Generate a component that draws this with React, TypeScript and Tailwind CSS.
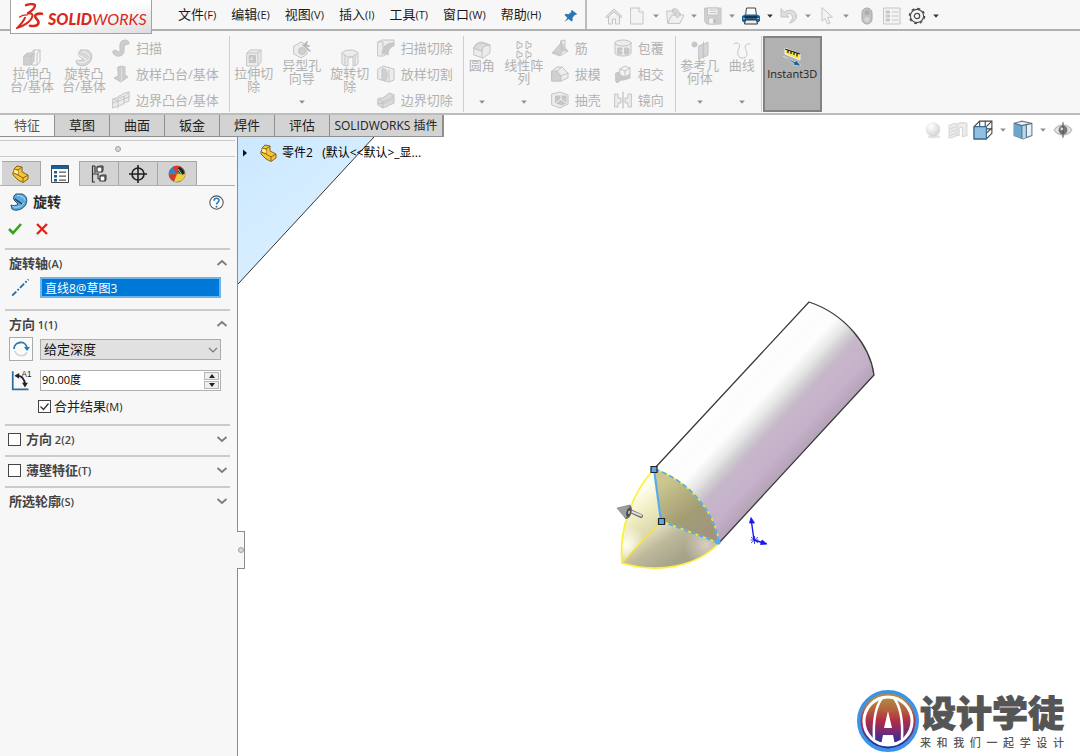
import React from "react";

type Kids = { children: React.ReactNode };

/* ---------- shared pieces ---------- */

function Ico({ children, size = 18 }: Kids & { size?: number }) {
  return (
    <svg viewBox="0 0 18 18" width={size} height={size} className="block shrink-0" fill="none" aria-hidden="true">
      {children}
    </svg>
  );
}

function Pale({ children }: Kids) {
  return (
    <Ico>
      <g fill="#ececec" stroke="#c4c4c4" strokeWidth="1" strokeLinejoin="round" strokeLinecap="round">
        {children}
      </g>
    </Ico>
  );
}

function Caret({ dark = false }: { dark?: boolean }) {
  return (
    <svg viewBox="0 0 10 10" width="10" height="10" className="block shrink-0" aria-hidden="true">
      <path d="M2.2 3.5h5.6L5 6.8z" fill={dark ? "#333" : "#8f8f8f"} />
    </svg>
  );
}

function Chevron({ up = false }: { up?: boolean }) {
  return (
    <svg viewBox="0 0 12 12" width="12" height="12" className="block shrink-0" fill="none" aria-hidden="true">
      <path d={up ? "M1.5 8 6 4l4.500 4" : "M1.500 4 6 8l4.500-4"} stroke="#7d7d7d" strokeWidth="1.8" />
    </svg>
  );
}

function Key({ children }: Kids) {
  return <span className="text-[11px]">{children}</span>;
}

/* ---------- ribbon icons ---------- */

const pale = {
  extrude: (
    <Pale>
      <path d="M8 4l3-3h6v12l-3 3H9z" fill="#f6f6f6" />
      <path d="M11 1v6M14 16V5l3-4" fill="none" />
      <path d="M1 7l3-3h7v8l-3 4H1z" fill="#cfcfcf" />
      <path d="M1 7h7v8M8 7l3-3" fill="none" />
    </Pale>
  ),
  revolve: (
    <Pale>
      <path d="M6 1h6c4 1 6 5 4 10-2 5-9 8-14 4l-1-4c2 1 5 1 7-1L4 7C3 4 4 2 6 1z" fill="#d6d6d6" />
      <path d="M7 3c3-1 6 1 7 4M4 6l8 5M2 12c3 3 9 2 12-2" fill="none" stroke="#f7f7f7" />
    </Pale>
  ),
  sweep: (
    <Pale>
      <path d="M10 2c3-2 7-1 7 2 0 2-3 1-4 2-2 2 1 10-5 11-5 1-8-3-7-5 1-1 3-1 4 0 1 1 3 2 3-1 0-4-1-7 2-9z" fill="#cdcdcd" />
    </Pale>
  ),
  loft: (
    <Pale>
      <path d="M6 2l4-1 3 1v8l3 2-7 5-7-4 4-2z" fill="#cdcdcd" />
      <path d="M9.500 3v13" fill="none" stroke="#dedede" />
    </Pale>
  ),
  boundary: (
    <Pale>
      <path d="M1 8c2-2 4 0 5-2s3-1 5-3 4-1 6-2v9c-3 2-4 0-6 3-2 2-4 1-10 4z" />
      <path d="M1 8c3 2 4 1 6-1s5 1 10-6M6 17V9M12 13V6M1 12l16-6" fill="none" />
    </Pale>
  ),
  cut: (
    <Pale>
      <path d="M2 4l3-3h11v12l-3 4H2zM2 4h11v12M13 4l3-3" />
      <rect x="4.500" y="6.500" width="6" height="7" fill="#c6c6c6" />
      <path d="M8 6.500v5H5" fill="#f1f1f1" />
    </Pale>
  ),
  hole: (
    <Pale>
      <path d="M1 5l7-4 6 3v9l-6 4-7-4z" />
      <circle cx="9" cy="10" r="3.500" fill="#cfcfcf" />
      <path d="M10 4l7 6M14 1l-2 3 4 1" stroke="#b3b3b3" strokeWidth="1.600" fill="none" />
    </Pale>
  ),
  revCut: (
    <Pale>
      <path d="M1 4c2-4 14-4 16 0v10c0 2-4 3-5 3V9c-1-2-4-2-5 0v8c-3 0-6-1-6-3z" />
      <path d="M1 4c2 3 5 3 8 5 2-2 6-2 8-5M4 6v10M14 6v10" fill="none" />
    </Pale>
  ),
  sweepCut: (
    <Pale>
      <path d="M1 3l4-2h12v3c-5 1-7 5-7 10l-3 3H1z" />
      <path d="M5 15C5 8 9 4 17 4v3c-4 1-6 4-6 9" fill="#c9c9c9" />
      <path d="M1 3h5v5" fill="none" />
    </Pale>
  ),
  loftCut: (
    <Pale>
      <path d="M1 4l5-3 11 3v11l-5 2-11-3z" />
      <path d="M8 4c3 2 3 9 0 12l-3-1V4z" fill="#d0d0d0" />
      <path d="M12 5v11" />
    </Pale>
  ),
  boundaryCut: (
    <Pale>
      <path d="M1 8c2-2 4 0 6-2s3-2 5-4l5 2v8c-3 2-4 1-6 3s-4 0-5 2l-5-3z" fill="#dadada" />
      <path d="M1 8l5 3c3-3 5 0 11-7M6 17v-6M1 12c4 2 9 0 16-5" fill="none" />
    </Pale>
  ),
  fillet: (
    <Pale>
      <path d="M1 6c1-3 4-5 8-5l8 3v8l-7 5-9-3z" />
      <path d="M1 7l8 3c0-4 3-6 8-6M9 10v7" fill="none" />
      <path d="M9 10c0-4 3-6 8-6l-7-2C5 2 2 4 1 7z" fill="#dcdcdc" />
    </Pale>
  ),
  pattern: (
    <Pale>
      <path
        d="M2 1v6.500h2V6h3V2.500H4V1zM11 1v6.500h2V6h3V2.500h-3V1zM2 10.500V17h2v-1.500h3V12H4v-1.500zM11 10.500V17h2v-1.500h3V12h-3v-1.500z"
        fill="#f4f4f4"
        stroke="#b8b8b8"
      />
    </Pale>
  ),
  rib: (
    <Pale>
      <path d="M10 2l4-1v9l3 2-8 5-8-3 9-3z" />
      <path d="M10 2v9l7 1M10 4L2 13l7 3 3-5z" fill="#cfcfcf" />
    </Pale>
  ),
  draft: (
    <Pale>
      <path d="M1 6l5-4h5l6 6v5l-7 3H1z" />
      <path d="M1 6h5l4 5v5H1z" fill="#d0d0d0" />
      <path d="M6 6l5-4M10 11l7-3" />
    </Pale>
  ),
  shell: (
    <Pale>
      <path d="M1 3l8-2 8 3v9l-8 4-8-3z" />
      <path d="M5 5h10v7l-4 2-6-2z" fill="#c6c6c6" />
      <path d="M5 12l5-4 5 4M10 8V5" fill="none" stroke="#f3f3f3" />
    </Pale>
  ),
  wrap: (
    <Pale>
      <path d="M1 4v10c0 4 16 4 16 0V4" />
      <ellipse cx="9" cy="4" rx="8" ry="3" />
      <path d="M4 9h4v2H6v2h2v2H4zM11 9h3l1 1v4l-1 1h-3z" fill="#c8c8c8" />
    </Pale>
  ),
  intersect: (
    <Pale>
      <path d="M2 8l4-1v3l5 2v-2l5-1v4l-6 2H7l-4 3-1-1z" fill="#c9c9c9" />
      <path d="M6 4l5-3 5 2v6l-5 3-5-2z" fill="#f2f2f2" />
      <path d="M6 4l5 2 5-3M11 6v6" fill="none" />
    </Pale>
  ),
  mirror: (
    <Pale>
      <path d="M1 3h3v4h3v5H4v4H1zM17 3h-3v4h-3v5h3v4h3z" />
      <path d="M9 1v16" stroke="#b3b3b3" />
    </Pale>
  ),
  refGeo: (
    <Pale>
      <circle cx="3.500" cy="3.500" r="2.500" fill="#c8c8c8" />
      <path d="M8 5l4-2v13l-4 2zM13 3l4-2v13l-4 2z" fill="#d6d6d6" />
      <path d="M12.500 1v16" strokeDasharray="2 1" />
    </Pale>
  ),
  curve: (
    <Pale>
      <path d="M1 3c3-3 7 0 5 4s-2 10 3 10 6-4 4-8 0-7 4-6" fill="none" />
    </Pale>
  ),
};

/* ---------- menu bar ---------- */

function Brand() {
  return (
    <a
      href="#home"
      aria-label="SOLIDWORKS"
      className="relative z-10 flex h-[34px] w-[142px] shrink-0 items-center border border-t-0 border-[#a3a3a3] bg-linear-to-br from-white via-white to-[#dcdcdc] pl-[5px] text-[#d9281e]"
    >
      <svg viewBox="0 0 28 28" width="28" height="28" className="block shrink-0" fill="none" stroke="currentColor" strokeLinecap="round">
        <path d="M10 2.200c4-1.400 9-1.500 9 .5 0 2.500-4 5.500-7 7.500" strokeWidth="2.400" />
        <path d="M12 10.200c4-.3 5.500 1.300 3.800 4.600-1.800 4-8 8.300-14.300 9.900 3-3 6-6 7.500-10" strokeWidth="2" />
        <path d="M3.500 14c2-1.500 5-2.300 8-2.200" strokeWidth="1.300" />
        <path d="M26 10.800c-5-.6-8 1-6.500 3.600 1 1.900 3.500 3 3 5.600-.5 2.800-5 3.500-8.500 2.700" strokeWidth="2.600" />
      </svg>
      <span className="mt-[4px] ml-[4px] font-['Lato'] text-[16px] leading-[20px] italic">
        <span className="font-black">SOLID</span>
        <span className="font-normal">WORKS</span>
      </span>
    </a>
  );
}

const menus: [string, string][] = [
  ["文件", "(F)"],
  ["编辑", "(E)"],
  ["视图", "(V)"],
  ["插入", "(I)"],
  ["工具", "(T)"],
  ["窗口", "(W)"],
  ["帮助", "(H)"],
];

function Tool({ label, caret, children }: Kids & { label: string; caret?: "pale" | "dark" }) {
  return (
    <button type="button" aria-label={label} className="flex shrink-0 items-center gap-[5px]">
      {children}
      {caret && <Caret dark={caret === "dark"} />}
    </button>
  );
}

function MenuBar() {
  return (
    <header className="flex h-[31px] items-start border-b-2 border-[#b0b0b0] bg-[#f7f7f7] pl-[10px]">
      <Brand />
      <nav className="ml-[26px] flex h-[30px] items-center gap-[15px] text-[13px] whitespace-nowrap text-[#1a1a1a]">
        {menus.map(([name, key]) => (
          <button type="button" key={name}>
            {name}
            <Key>{key}</Key>
          </button>
        ))}
      </nav>
      <button type="button" aria-label="固定" className="ml-[21px] flex h-[31px] items-center">
        <Ico>
          <path d="M10 3l5 4-1 1-1-.3-2.500 3 .3 2.600-1.300 1.200-3-2.600L2.500 15l2.800-4.300L2.500 8l1.300-1.200 2.700.4L9.300 5 9 4z" fill="#2b78b5" />
        </Ico>
      </button>
      <div className="ml-[5px] h-[29px] w-[2px] shrink-0 bg-[#bdbdbd]" />
      <div className="ml-[18px] flex h-[31px] items-center gap-[5px]">
        <Tool label="主页">
          <Pale>
            <path d="M3.500 9v8h4v-5h3v5h4V9" fill="#f1f1f1" />
            <path d="M1 9.500 9 2l8 7.500-1.500 1L9 5l-6.500 5.500z" fill="#e2e2e2" />
          </Pale>
        </Tool>
        <Tool label="新建" caret="pale">
          <Pale>
            <path d="M3 1h8l4 4v12H3z" fill="#f4f4f4" />
            <path d="M11 1v4h4" fill="#fff" />
          </Pale>
        </Tool>
        <Tool label="打开" caret="pale">
          <Pale>
            <path d="M1 4h5l1 2h7v10H2z" />
            <path d="M2 16l4-8h12l-4 8z" fill="#f1f1f1" />
            <path d="M7 2c4-1 6 1 6 5h2l-3.500 4L8 7h2c0-2-1-3-3-3z" fill="#dadada" />
          </Pale>
        </Tool>
        <Tool label="保存" caret="pale">
          <Pale>
            <path d="M1 1h16v16H3l-2-2z" fill="#cfcfcf" />
            <path d="M4 1h10v7H4zM5 11h8v6H5z" fill="#f1f1f1" />
            <path d="M6 3h6M6 5.500h6" />
            <path d="M10 12h2v4h-2z" fill="#bbb" />
          </Pale>
        </Tool>
        <Tool label="打印" caret="dark">
          <Ico>
            <path d="M4.500 1h9l1 8h-11z" fill="#fbfbfb" stroke="#444" />
            <path d="M0 9l3-1.500h12L18 9v5l-2 1.500H2L0 14z" fill="#1c659c" />
            <path d="M3 9h12l1 2H2z" fill="#16354d" />
            <path d="M3.500 13h11l1 4h-13z" fill="#eee" stroke="#333" />
            <path d="M1 11.500h2M15 11.500h2" stroke="#8cc2e8" />
          </Ico>
        </Tool>
        <Tool label="撤消" caret="pale">
          <Pale>
            <path d="M1 2v8h8L6.500 7.500c3-2 6 0 6 3 0 2-1 3-3 5.500 5-1 7-4 7-7 0-5-7-8-12-4z" fill="#dedede" />
          </Pale>
        </Tool>
        <Tool label="选择" caret="pale">
          <Pale>
            <path d="M4 1v13l3-2.500L9.500 17l2.500-1-2.500-5.500L14 10z" fill="#f3f3f3" />
          </Pale>
        </Tool>
        <div className="ml-[2px] flex items-center gap-[7px]">
          <Tool label="重建模型">
            <Ico>
              <rect x="4" y="1" width="10" height="16" rx="5" fill="#c2c2c2" stroke="#a9a9a9" />
              <circle cx="9" cy="5.500" r="2.500" fill="#adadad" />
              <circle cx="9" cy="12.500" r="2.500" fill="#d6d6d6" />
            </Ico>
          </Tool>
          <Tool label="文件属性">
            <Pale>
              <path d="M1 1h16v16H1z" fill="#f4f4f4" />
              <path d="M3.500 4h3v2h-3zM3.500 8h3v2h-3zM3.500 12h3v2h-3zM9 5h6M9 9h6M9 13h6" fill="#ccc" />
            </Pale>
          </Tool>
          <Tool label="选项" caret="dark">
            <Ico>
              <circle cx="9" cy="9" r="6.600" stroke="#4a4a4a" strokeWidth="1.100" fill="#f7f7f7" />
              <circle cx="9" cy="9" r="7.600" stroke="#4a4a4a" strokeWidth="1.300" strokeDasharray="3.020 2.949" />
              <circle cx="9" cy="9" r="2.700" stroke="#4a4a4a" strokeWidth="1.200" />
            </Ico>
          </Tool>
        </div>
      </div>
    </header>
  );
}

/* ---------- ribbon ---------- */

function Big({
  icon,
  text,
  narrow = false,
  menu = false,
}: {
  icon: React.ReactNode;
  text: string;
  narrow?: boolean;
  menu?: boolean;
}) {
  return (
    <button
      type="button"
      className={`flex shrink-0 flex-col items-center ${narrow ? "w-9" : "w-12"} ${menu ? "pt-[5px]" : "pt-[13px]"}`}
    >
      {icon}
      <span className="block w-full text-center leading-[13px] break-all whitespace-normal">{text}</span>
      {menu && (
        <span className="mt-auto mb-[5px]">
          <Caret />
        </span>
      )}
    </button>
  );
}

function Stack({ items }: { items: [React.ReactNode, string][] }) {
  return (
    <div className="flex shrink-0 flex-col gap-[8px] pt-[3px]">
      {items.map(([icon, text]) => (
        <button type="button" key={text} className="flex h-[18px] items-center gap-[6px] leading-[18px]">
          {icon}
          <span>{text}</span>
        </button>
      ))}
    </div>
  );
}

function Group({ children, className }: Kids & { className: string }) {
  return <div className={`flex shrink-0 border-r border-[#cfcfcf] ${className}`}>{children}</div>;
}

function Ribbon() {
  return (
    <section className="flex h-[84px] border-b-2 border-[#bcbcbc] bg-[#f7f7f7] pt-[5px] pb-[1px] text-[13px] whitespace-nowrap text-[#b2b2b2]">
      <Group className="gap-[4px] pr-[10px] pl-[8px]">
        <Big icon={pale.extrude} text="拉伸凸台/基体" />
        <Big icon={pale.revolve} text="旋转凸台/基体" />
        <Stack
          items={[
            [pale.sweep, "扫描"],
            [pale.loft, "放样凸台/基体"],
            [pale.boundary, "边界凸台/基体"],
          ]}
        />
      </Group>
      <Group className="pr-[10px]">
        <Big icon={pale.cut} text="拉伸切除" />
        <Big icon={pale.hole} text="异型孔向导" menu />
        <Big icon={pale.revCut} text="旋转切除" />
        <span className="w-[3px]" />
        <Stack
          items={[
            [pale.sweepCut, "扫描切除"],
            [pale.loftCut, "放样切割"],
            [pale.boundaryCut, "边界切除"],
          ]}
        />
      </Group>
      <Group className="pr-[11px]">
        <Big icon={pale.fillet} text="圆角" narrow menu />
        <Big icon={pale.pattern} text="线性阵列" menu />
        <div className="ml-[3px] flex gap-[13px]">
          <Stack
            items={[
              [pale.rib, "筋"],
              [pale.draft, "拔模"],
              [pale.shell, "抽壳"],
            ]}
          />
          <Stack
            items={[
              [pale.wrap, "包覆"],
              [pale.intersect, "相交"],
              [pale.mirror, "镜向"],
            ]}
          />
        </div>
      </Group>
      <Group className="pr-[1px]">
        <Big icon={pale.refGeo} text="参考几何体" menu />
        <Big icon={pale.curve} text="曲线" narrow menu />
      </Group>
      <button
        type="button"
        aria-pressed="true"
        className="ml-px flex w-[59px] shrink-0 flex-col items-center border-2 border-[#828282] bg-[#b1b1b1] pt-[10px] text-[#222]"
      >
        <Ico>
          <path d="M2 0l15 6v6L2 6z" fill="#ffe14a" stroke="#f4f4f4" />
          <path d="M2 1l15 5M5 2v3M8 3v3M11 4v3M14 5.500v3" stroke="#222" strokeWidth="1.300" />
          <path d="M0 8l12 6 1-2 5 6-8-1 1-1.500z" fill="#1d5f94" stroke="#e8eef3" strokeWidth=".6" />
        </Ico>
        <span className="font-['Open_Sans'] text-[11px] leading-[16px]">Instant3D</span>
      </button>
    </section>
  );
}

/* ---------- command tabs and view toolbar ---------- */

const tabs = ["特征", "草图", "曲面", "钣金", "焊件", "评估", "SOLIDWORKS 插件"];

function TabRow() {
  return (
    <div className="relative z-10 flex h-[22px] justify-between">
      <div role="tablist" className="flex text-[13px] leading-[19px] whitespace-nowrap text-[#222]">
        {tabs.map((tab, i) => (
          <button
            type="button"
            role="tab"
            key={tab}
            aria-selected={i === 0}
            className={
              i === 0
                ? "w-[54px] shrink-0 border-b border-[#8f8f8f] bg-[#f7f7f7] text-[#555]"
                : i === tabs.length - 1
                  ? "w-[115px] shrink-0 border-r-2 border-b border-l border-[#8f8f8f] bg-[#d3d3d3] text-[12px]"
                  : "w-[55px] shrink-0 border-b border-l border-[#8f8f8f] bg-[#d3d3d3]"
            }
          >
            {tab}
          </button>
        ))}
      </div>
      <div className="-mr-2 flex shrink-0 items-start gap-[5px] pt-[5px]">
        <Tool label="编辑外观">
          <Ico size={20}>
            <defs>
              <radialGradient id="ball" cx=".35" cy=".3" r=".75">
                <stop offset="0" stopColor="#fff" />
                <stop offset="1" stopColor="#d2d2d2" />
              </radialGradient>
            </defs>
            <ellipse cx="10" cy="15" rx="6" ry="1.500" fill="#e3e3e3" />
            <circle cx="9" cy="8.500" r="6.500" fill="url(#ball)" />
          </Ico>
        </Tool>
        <Tool label="应用布景">
          <Ico size={20}>
            <path d="M1 5l5-2 2 1v10l-5 2H1zM8 4c2-2 5-2 9-1v11l-4 1V7c-2-1-3 0-3 1v6H8z" fill="#ececec" stroke="#d6d6d6" />
            <path d="M2 8l5-2M2 11l5-2M2 14l5-2" stroke="#d6d6d6" />
          </Ico>
        </Tool>
        <Tool label="视图定向" caret="pale">
          <Ico size={20}>
            <path d="M1 6l5-5h11v11l-5 5H1z" fill="#fff" stroke="#444" />
            <path d="M6 1v5M11 1v5M12 8h5M12 12l5-5M12 17V6l5-5" stroke="#444" />
            <path d="M1 6h11v11H1z" fill="#8fc0e2" stroke="#3a6b90" />
          </Ico>
        </Tool>
        <Tool label="显示样式" caret="pale">
          <Ico size={20}>
            <path d="M1 3l7-2 9 2v11l-8 3-8-3z" fill="#e9f2f8" stroke="#6f7d88" />
            <path d="M1 3l7 2v12l-7-3z" fill="#6aa6cf" />
            <path d="M8 5l4-1v12l-4 1z" fill="#b9d9ec" />
            <path d="M1 3l7 2 9-2M8 5v12M12 4v12" stroke="#5b6f7d" />
          </Ico>
        </Tool>
        <Tool label="隐藏/显示项目" caret="pale">
          <Ico size={20}>
            <path d="M1 9c4-6 12-6 16 0-4 6-12 6-16 0z" fill="#e4e4e4" stroke="#b5b5b5" />
            <circle cx="9" cy="9" r="4" fill="#777" />
            <path d="M9 2v14" stroke="#555" />
            <circle cx="8" cy="8" r="1.200" fill="#ddd" />
          </Ico>
        </Tool>
      </div>
    </div>
  );
}

/* ---------- property panel ---------- */

function PartIcon() {
  return (
    <Ico>
      <path d="M2 4l3-3 5 1v5l6 3v4l-5 3.500L6 15 1 10V7l1-1z" fill="#f2c53a" stroke="#8a6414" />
      <path d="M2 4l4 1 4-3M6 5v5l5 3 5-3M11 13v4M1.500 8 6 10" stroke="#8a6414" />
      <path d="M2.500 4.500 6 6v3L2 7.500z" fill="#fff0a0" />
    </Ico>
  );
}

const panelTabs: [string, React.ReactNode][] = [
  ["特征管理", <PartIcon key="a" />],
  [
    "属性管理",
    <Ico key="b">
      <path d="M.5.500h17v17H.5z" fill="#fff" stroke="#444" />
      <path d="M1 1h16v3H1z" fill="#1e5f96" />
      <path d="M3 6h3v2.500H3zM3 10h3v2.500H3zM3 14h3v2.500H3z" fill="#1e5f96" />
      <path d="M8 7.200h7M8 11.200h7M8 15.200h7" stroke="#555" strokeWidth="1.200" />
    </Ico>,
  ],
  [
    "配置管理",
    <Ico key="c">
      <path d="M5 1H2.500v16H5M2.500 9H9M5 1v7" stroke="#333" strokeWidth="1.200" />
      <path d="M7 2h5v5H7zM10 11h5v5h-5z" fill="#fff" stroke="#333" strokeWidth="1.200" />
      <path d="M7 2l2-1h4v5l-1 1M10 11l2-1h4v5l-1 1M8 9v5h2" stroke="#333" />
    </Ico>,
  ],
  [
    "尺寸管理",
    <Ico key="d">
      <circle cx="9" cy="9" r="6" stroke="#222" strokeWidth="1.600" />
      <path d="M9 0v18M0 9h18" stroke="#222" strokeWidth="1.600" />
    </Ico>,
  ],
  [
    "外观管理",
    <Ico key="e">
      <circle cx="9" cy="9" r="8" fill="#4fa84a" stroke="#777" />
      <path d="M9 9H1c0-3 2-6 5-7.400z" fill="#2f86d0" />
      <path d="M9 9 4.500 2.400C7 .4 11 .8 13 2z" fill="#e23a25" />
      <path d="M9 9 1.200 9.500C1.500 13 3 15 6 16.500z" fill="#d8382a" />
      <path d="M9 9h8c0 5-4 8.500-11 7.500z" fill="#f0cf3e" />
      <ellipse cx="13" cy="6" rx="2.400" ry="4.200" transform="rotate(-35 13 6)" fill="#262626" />
      <path d="M10 4l4 6" stroke="#d9c4c0" strokeWidth="1" />
    </Ico>,
  ],
];

function CheckBox({ id, checked = false }: { id: string; checked?: boolean }) {
  return (
    <span className="grid size-[13px] shrink-0">
      <input
        id={id}
        type="checkbox"
        defaultChecked={checked}
        className="peer col-start-1 row-start-1 size-[13px] appearance-none border border-[#444] bg-white"
      />
      <svg
        viewBox="0 0 13 13"
        width="13"
        height="13"
        fill="none"
        aria-hidden="true"
        className="pointer-events-none col-start-1 row-start-1 hidden peer-checked:block"
      >
        <path d="M2.500 6.500l3 3 5-6" stroke="#333" strokeWidth="1.300" />
      </svg>
    </span>
  );
}

function Rule() {
  return <div className="mr-[7px] ml-[5px] h-[2px] bg-[#cbcbcb]" />;
}

function Section({ title, hot, open }: { title: string; hot: string; open: boolean }) {
  return (
    <button
      type="button"
      aria-expanded={open}
      className="flex h-[20px] w-full items-center justify-between pr-[9px] pl-[9px] text-[13px] leading-[20px] font-semibold text-[#444]"
    >
      <span>
        {title}
        <Key>{hot}</Key>
      </span>
      <Chevron up={open} />
    </button>
  );
}

function CheckSection({ id, title, hot }: { id: string; title: string; hot: string }) {
  return (
    <div className="flex h-[20px] items-center pr-[9px] pl-[8px] text-[13px] leading-[20px] font-semibold text-[#444]">
      <CheckBox id={id} />
      <label htmlFor={id} className="ml-[5px]">
        {title}
        <Key>{hot}</Key>
      </label>
      <button type="button" aria-label={title} className="ml-auto">
        <Chevron />
      </button>
    </div>
  );
}

function Panel() {
  return (
    <aside className="relative w-[238px] shrink-0 border-r border-[#8c8c8c] bg-[#f7f7f7]">
      <div className="mt-[3px] mr-[2px] flex h-[17px] items-center justify-center border-t border-b border-[#cacaca]">
        <span className="size-[6px] rounded-full border border-[#a0a0a0] bg-[#d8d8d8]" />
      </div>
      <div role="tablist" className="mt-[4px] mr-[2px] flex h-[25px] border-b border-[#b0b0b0] pl-[2px]">
        {panelTabs.map(([name, icon], i) => (
          <button
            type="button"
            role="tab"
            key={name}
            aria-label={name}
            aria-selected={i === 1}
            className={`flex w-[39px] items-center justify-center border-r ${
              i === 1 ? "-mb-px border-[#a6a6a6] bg-[#f7f7f7]" : "border-t border-[#a6a6a6] bg-[#d3d3d3]"
            }`}
          >
            {icon}
          </button>
        ))}
      </div>
      <div className="mt-[6px] flex h-[20px] items-center pr-[13px] pl-[10px]">
        <Ico>
          <path d="M6 1h6c4 1 6 5 4 10-2 5-10 8-14 5l-1-4c2 1 5 1 7-1L4 7C3 4 4 2 6 1z" fill="#5aa7d8" stroke="#1d4e78" />
          <path d="M7 2.500c4-.5 7 2 8 5M2.500 13.500c5 1.500 9 .5 11-3.500" stroke="#b9def2" />
          <path d="M5 6l7 5" stroke="#173c5c" strokeWidth="1.300" />
        </Ico>
        <h1 className="ml-[5px] text-[14px] leading-[20px] font-bold text-[#2a2a2a]">旋转</h1>
        <button type="button" aria-label="帮助" className="ml-auto">
          <Ico size={15}>
            <circle cx="9" cy="9" r="8" fill="#fff" stroke="#555" strokeWidth="1.300" />
            <path d="M6 7c0-4 6-4 6-.5C12 9 9 8.500 9 11.500" stroke="#2b78b5" strokeWidth="1.900" />
            <circle cx="9" cy="14" r="1.200" fill="#2b78b5" />
          </Ico>
        </button>
      </div>
      <div className="mt-[10px] flex h-[14px] items-center gap-[14px] pl-[8px]">
        <button type="button" aria-label="确定">
          <svg viewBox="0 0 14 14" width="14" height="14" fill="none">
            <path d="M1 7l4 4L13 2" stroke="#36a420" strokeWidth="2.600" />
          </svg>
        </button>
        <button type="button" aria-label="取消">
          <svg viewBox="0 0 12 14" width="12" height="14" fill="none">
            <path d="M1 2l10 10M11 2 1 12" stroke="#e0251c" strokeWidth="2.400" />
          </svg>
        </button>
      </div>

      <div className="h-[12px]" />
      <Rule />
      <div className="pt-[3px] pb-[11px]">
        <Section title="旋转轴" hot="(A)" open />
        <div className="mt-[4px] flex items-center gap-[8px] pr-[16px] pl-[11px]">
          <Ico size={21}>
            <path d="M1 16 15 2" stroke="#2d6d9f" strokeWidth="1.600" strokeDasharray="5 1.500 1.500 1.500" />
          </Ico>
          <input
            aria-label="旋转轴"
            readOnly
            value="直线8@草图3"
            className="h-[21px] min-w-0 flex-1 border-2 border-[#6bb4ea] bg-[#0078d7] px-[3px] text-[12px] text-white outline-none"
          />
        </div>
      </div>
      <Rule />
      <div className="pt-[3px] pb-[8px]">
        <Section title="方向" hot=" 1(1)" open />
        <div className="mt-[3px] flex items-center gap-[7px] pr-[16px] pl-[9px]">
          <button type="button" aria-label="反向" className="flex size-[24px] shrink-0 items-center justify-center border border-[#ababab] bg-[#fbfbfb]">
            <Ico>
              <path d="M2 9c0-8 12-9 13-1" stroke="#2d78b0" strokeWidth="1.800" />
              <path d="M12 7h6l-3 4z" fill="#2d78b0" />
              <path d="M3 11c2 6 10 6 12 1" stroke="#d5d5d5" strokeWidth="1.800" />
            </Ico>
          </button>
          <div className="relative min-w-0 flex-1">
            <select
              aria-label="终止条件"
              className="block h-[21px] w-full appearance-none border border-[#acacac] bg-[#e1e1e1] px-[3px] text-[13px] leading-[18px] text-[#111]"
            >
              <option>给定深度</option>
            </select>
            <span className="pointer-events-none absolute top-[5px] right-[2px]">
              <svg viewBox="0 0 12 12" width="12" height="12" fill="none">
                <path d="M2 4l4 4 4-4" stroke="#777" strokeWidth="1.200" />
              </svg>
            </span>
          </div>
        </div>
        <div className="mt-[9px] flex items-center gap-[8px] pr-[16px] pl-[11px]">
          <Ico size={21}>
            <path d="M1.500 1v15.500H15" stroke="#2d6d9f" strokeWidth="1.500" />
            <path d="M4 5c5-1 8 3 8 8" stroke="#222" strokeWidth="1.500" />
            <path d="M3 5l4-2.500v5zM9.500 11h5L12 15z" fill="#222" />
            <text x="9" y="6" fontSize="7" fontFamily="Liberation Sans" fill="#222">
              A1
            </text>
          </Ico>
          <div className="flex h-[21px] min-w-0 flex-1 border border-[#b0b0b0] bg-white">
            <input aria-label="角度" defaultValue="90.00度" className="min-w-0 flex-1 px-[1px] text-[11px] text-black outline-none" />
            <div className="flex w-[17px] shrink-0 flex-col gap-px p-px">
              <button type="button" aria-label="增加" className="flex flex-1 items-center justify-center border border-[#b5b5b5] bg-[#efefef]">
                <svg viewBox="0 0 6 4" width="6" height="4">
                  <path d="M0 4h6L3 0z" fill="#222" />
                </svg>
              </button>
              <button type="button" aria-label="减少" className="flex flex-1 items-center justify-center border border-[#b5b5b5] bg-[#efefef]">
                <svg viewBox="0 0 6 4" width="6" height="4">
                  <path d="M0 0h6L3 4z" fill="#222" />
                </svg>
              </button>
            </div>
          </div>
        </div>
        <div className="mt-[5px] flex h-[20px] items-center gap-[3px] pl-[38px] text-[13px] leading-[20px] text-[#222]">
          <CheckBox id="merge" checked />
          <label htmlFor="merge">
            合并结果<Key>(M)</Key>
          </label>
        </div>
      </div>
      <Rule />
      <div className="pt-[3px] pb-[6px]">
        <CheckSection id="dir2" title="方向" hot=" 2(2)" />
      </div>
      <Rule />
      <div className="pt-[3px] pb-[6px]">
        <CheckSection id="thin" title="薄壁特征" hot="(T)" />
      </div>
      <Rule />
      <div className="pt-[3px] pb-[6px]">
        <Section title="所选轮廓" hot="(S)" open={false} />
      </div>

      <button
        type="button"
        aria-label="折叠面板"
        className="absolute top-[394px] left-full z-10 flex h-[38px] w-[8px] items-center justify-center border border-l-0 border-[#8c8c8c] bg-[#f7f7f7]"
      >
        <span className="size-[6px] shrink-0 rounded-full border border-[#a0a0a0] bg-[#d8d8d8]" />
      </button>
    </aside>
  );
}

/* ---------- graphics area ---------- */

function Scene() {
  return (
    <svg className="absolute inset-0 h-full w-full" fill="none" aria-hidden="true">
      <defs>
        <linearGradient id="sky" x1="238" y1="137" x2="300" y2="215" gradientUnits="userSpaceOnUse">
          <stop offset="0" stopColor="#cbe8ff" />
          <stop offset="1" stopColor="#d6edff" />
        </linearGradient>
        <linearGradient id="barrel" x1="731" y1="385" x2="802" y2="451" gradientUnits="userSpaceOnUse">
          <stop offset="0" stopColor="#fff" />
          <stop offset=".15" stopColor="#fcfcfc" />
          <stop offset=".32" stopColor="#fdfdfd" />
          <stop offset=".45" stopColor="#e6e6e6" />
          <stop offset=".53" stopColor="#d2cfd3" />
          <stop offset=".62" stopColor="#c7b7ca" />
          <stop offset=".85" stopColor="#c5b1c9" />
          <stop offset="1" stopColor="#b6a4ba" />
        </linearGradient>
        <linearGradient id="faceL" x1="632" y1="495" x2="664" y2="540" gradientUnits="userSpaceOnUse">
          <stop offset="0" stopColor="#fffff0" />
          <stop offset=".35" stopColor="#f1eec4" />
          <stop offset="1" stopColor="#cfcaa0" />
        </linearGradient>
        <linearGradient id="faceR" x1="665" y1="480" x2="710" y2="540" gradientUnits="userSpaceOnUse">
          <stop offset="0" stopColor="#cdc78f" />
          <stop offset=".55" stopColor="#a39d74" />
          <stop offset="1" stopColor="#a0937f" />
        </linearGradient>
        <linearGradient id="faceB" x1="640" y1="530" x2="665" y2="568" gradientUnits="userSpaceOnUse">
          <stop offset="0" stopColor="#f0edcb" />
          <stop offset=".5" stopColor="#bdb99a" />
          <stop offset="1" stopColor="#a6a38c" />
        </linearGradient>
        <radialGradient id="glow" cx="626" cy="545" r="20" gradientUnits="userSpaceOnUse">
          <stop offset="0" stopColor="#fffff2" />
          <stop offset="1" stopColor="#fffff2" stopOpacity="0" />
        </radialGradient>
        <radialGradient id="blush" cx="706" cy="545" r="22" gradientUnits="userSpaceOnUse">
          <stop offset="0" stopColor="#d9cfc4" />
          <stop offset="1" stopColor="#d9cfc4" stopOpacity="0" />
        </radialGradient>
      </defs>
      <g transform="translate(-238 -137)">
        <path d="M238 137h136L238 284z" fill="url(#sky)" />
        <path d="M374 137 238 284" stroke="#333" />

        <path d="M654 469 809 302C845 314 870 345 874 375L719 543C716 514 690 481 654 469z" fill="url(#barrel)" />
        <path d="M654 469 809 302C845 314 870 345 874 375L719 543" stroke="#3a3a3a" strokeWidth="1.300" />

        <path d="M654 469C631 495 619 529 622 563L661 521z" fill="url(#faceL)" />
        <path d="M654 469C631 495 619 529 622 563L661 521z" fill="url(#glow)" />
        <path d="M654 469 661 521 719 543C716 514 690 481 654 469z" fill="url(#faceR)" />
        <path d="M622 563 661 521 719 543C696 567 658 574 622 563z" fill="url(#faceB)" />
        <path d="M622 563 661 521 719 543C696 567 658 574 622 563z" fill="url(#blush)" />
        <path d="M654 469C631 495 619 529 622 563C658 574 696 567 719 543" stroke="#fbf03a" strokeWidth="1.700" />
        <path d="M622 563 661 521 719 543C716 514 690 481 654 469" stroke="#f3e53c" strokeWidth="1.500" />
        <path d="M661 521 719 543C716 514 690 481 654 469" stroke="#58aaf0" strokeWidth="1.800" strokeDasharray="5 3" />
        <path d="M654 469l7 52" stroke="#58aaf0" strokeWidth="2.200" />
        <circle cx="718" cy="542" r="2.600" fill="#58aaf0" />
        <path d="M651 466.500h6v6h-6zM658.500 518.500h6v6h-6z" fill="#58aaf0" stroke="#222" strokeWidth="1.200" />

        <path d="M630 511l11 5" stroke="#666" strokeWidth="4" strokeLinecap="round" />
        <path d="M630 511l11 4.500" stroke="#ddd" strokeWidth="2" strokeLinecap="round" />
        <ellipse cx="628" cy="512" rx="3.500" ry="7" transform="rotate(15 628 512)" fill="#666" />
        <path d="M617 508l13-3-4 14z" fill="#9c9c9c" stroke="#777" strokeWidth=".6" />
        <ellipse cx="628.500" cy="512" rx="2" ry="4" transform="rotate(15 628 512)" fill="#444" />
        <ellipse cx="629" cy="512" rx="1" ry="2" transform="rotate(15 628 512)" fill="#bbb" />

        <g stroke="#1717ee" fill="#1717ee">
          <path d="M754 540l-2.500-18M754 540l8 2.500" strokeWidth="1.400" />
          <path d="M751 517.500l-1.500 5.500h5zM767 544l-6.500.500 1.500-4.500z" strokeWidth=".8" />
          <path d="M751 537l7 6M758 537l-7 6M754.500 536v8M750.500 540h8" strokeWidth=".8" />
        </g>
      </g>
    </svg>
  );
}

function Watermark() {
  return (
    <div className="absolute right-[16px] bottom-[3px] flex items-center text-[#555]">
      <svg viewBox="0 0 64 64" width="64" height="64" className="shrink-0" fill="none" aria-hidden="true">
        <defs>
          <linearGradient id="mark" x1="0" y1="10" x2="0" y2="54" gradientUnits="userSpaceOnUse">
            <stop offset="0" stopColor="#b08a3c" />
            <stop offset=".25" stopColor="#b5603f" />
            <stop offset=".5" stopColor="#b02c48" />
            <stop offset=".72" stopColor="#7a2a72" />
            <stop offset="1" stopColor="#26309a" />
          </linearGradient>
        </defs>
        <circle cx="32" cy="32" r="29" stroke="#3b94e6" strokeWidth="4" fill="#fff" />
        <circle cx="32" cy="32" r="26.500" stroke="url(#mark)" strokeWidth="1.800" />
        <circle cx="32" cy="32" r="22.500" fill="url(#mark)" />
        <path d="M26 9C20 17 17 30 18 50M38 9c6 8 9 21 8 41" stroke="#fff" strokeWidth="2.500" />
        <path d="M32 22l4 17h-8zM27 46h10l2 10H25z" fill="#fff" />
      </svg>
      <div>
        <div className="text-[36px] leading-[44px] font-black [-webkit-text-stroke:1px_#555]">设计学徒</div>
        <div className="flex justify-between text-[11px] leading-[14px] font-medium">
          {Array.from("来和我们一起学设计").map((ch, i) => (
            <span key={i}>{ch}</span>
          ))}
        </div>
      </div>
    </div>
  );
}

function Viewport() {
  return (
    <main className="relative min-w-0 flex-1 overflow-hidden bg-white">
      <Scene />
      <button type="button" className="relative flex items-center pt-[6px] pl-[2px] text-[12px] leading-[20px] whitespace-pre text-black">
        <svg viewBox="0 0 10 10" width="10" height="10" aria-hidden="true">
          <path d="M3 1.500 7 5 3 8.500z" fill="#111" />
        </svg>
        <span className="mr-[4px] ml-[10px]">
          <PartIcon />
        </span>
        {"零件2   (默认<<默认>_显..."}
      </button>
      <Watermark />
    </main>
  );
}

export default function App() {
  return (
    <div className="flex min-h-screen flex-col overflow-x-hidden bg-white font-['Open_Sans','Noto_Sans_CJK_SC',sans-serif]">
      <MenuBar />
      <Ribbon />
      <TabRow />
      <div className="flex flex-1">
        <Panel />
        <Viewport />
      </div>
    </div>
  );
}
